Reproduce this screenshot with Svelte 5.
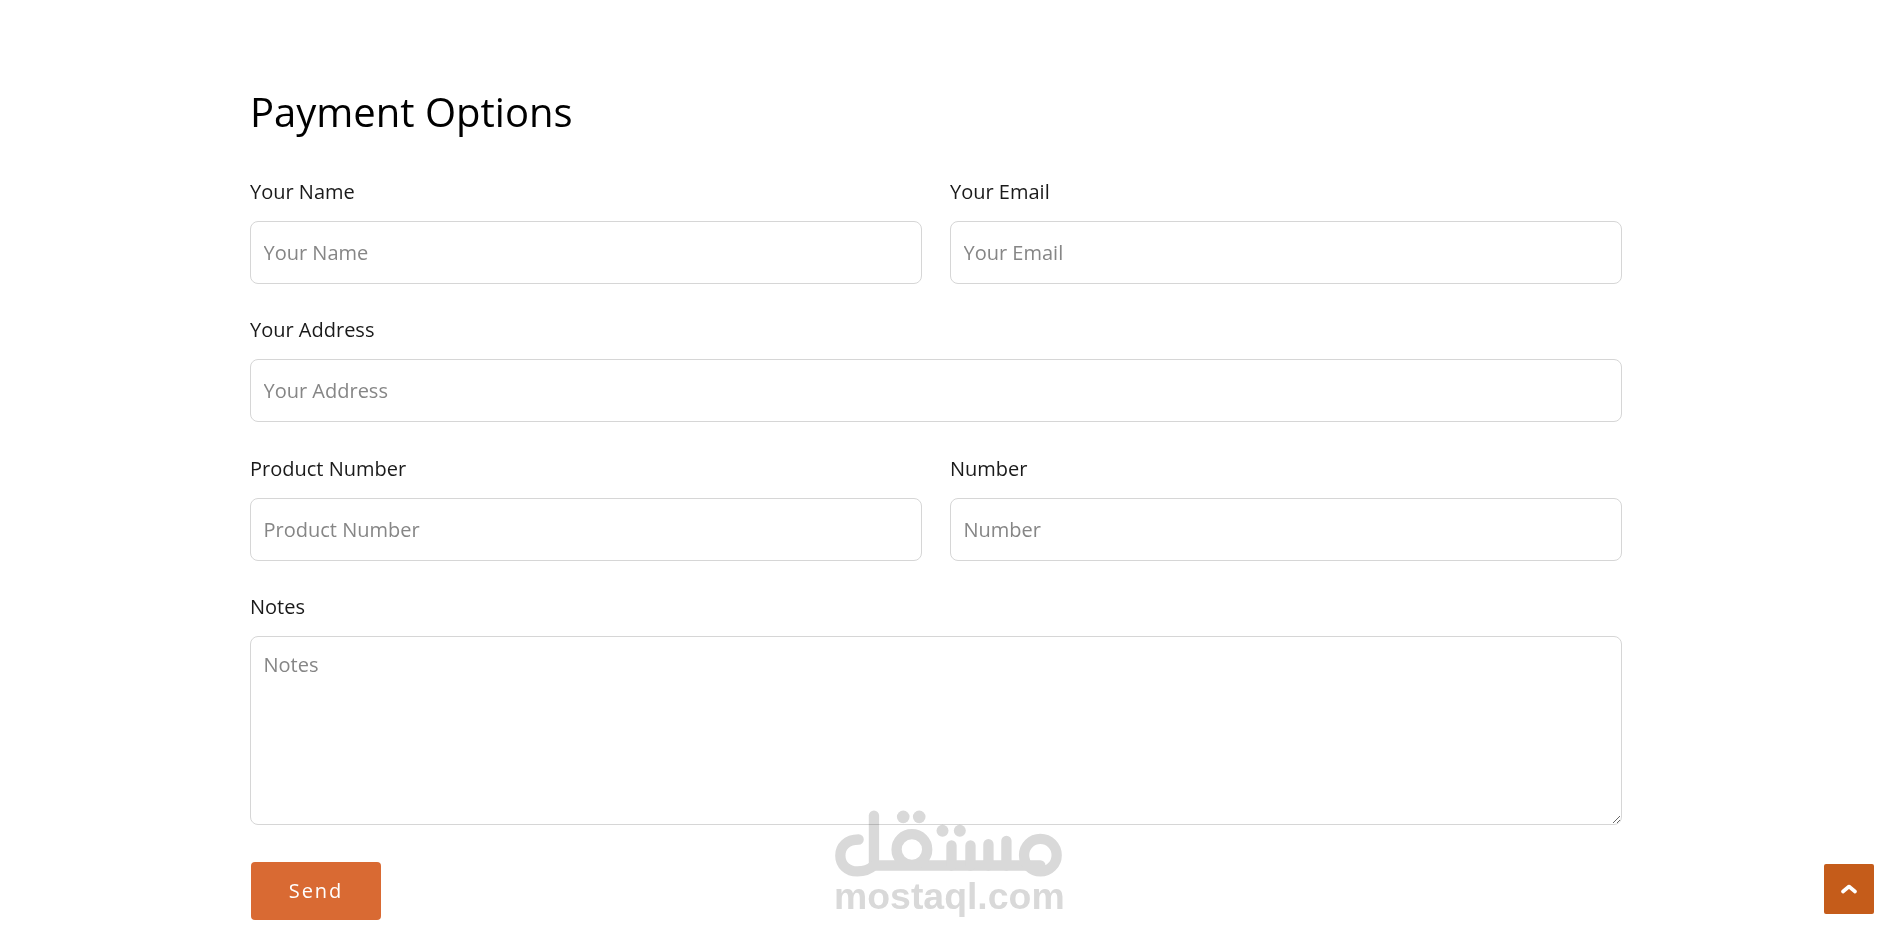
<script>
  const rows = [
    [{ label: "Your Name" }, { label: "Your Email" }],
    [{ label: "Your Address" }],
    [{ label: "Product Number" }, { label: "Number" }]
  ];
</script>

<main class="page">
  <h2 class="title">Payment Options</h2>
  <form class="form" on:submit|preventDefault>
    {#each rows as row}
      <div class="row">
        {#each row as field}
          <div class="field">
            <label for={field.label}>{field.label}</label>
            <input id={field.label} type="text" placeholder={field.label} />
          </div>
        {/each}
      </div>
    {/each}
    <div class="field">
      <label for="notes">Notes</label>
      <textarea id="notes" placeholder="Notes"></textarea>
    </div>
    <button class="send" type="submit">Send</button>
  </form>
</main>

<!-- watermark sits over the form -->
<div class="watermark" aria-hidden="true">
  <svg class="mark" viewBox="105 90 682 200" width="227" height="67">
    <g fill="none" stroke="#d9d9d9" stroke-width="31" stroke-linecap="round" stroke-linejoin="round">
      <path d="M222 106V256" />
      <path d="M176 178C140 178 121 200 121 226C121 254 142 274 172 274C198 274 212 265 222 256H722" />
      <circle cx="336" cy="208" r="46" />
      <path d="M455 196V256M512 196V256M566 192V256M620 182V256" />
      <circle cx="722" cy="225" r="49" />
    </g>
    <g fill="#d9d9d9">
      <circle cx="310" cy="110" r="19" />
      <circle cx="358" cy="110" r="19" />
      <circle cx="428" cy="152" r="18" />
      <circle cx="480" cy="152" r="18" />
    </g>
  </svg>
  <span class="mark-text">mostaql.com</span>
</div>

<button class="to-top" type="button" aria-label="Back to top">
  <svg viewBox="0 0 16 10" width="16" height="10">
    <path d="M2 7.5L8 2.5L14 7.5" fill="none" stroke="#fff" stroke-width="3.6" stroke-linecap="round" stroke-linejoin="round" />
  </svg>
</button>

<style>
  :global(body) {
    background: #fff;
    overflow: hidden;
  }

  .page {
    width: 1372px;
    margin-left: 250px;
    padding-top: 85px;
    font-family: "Open Sans", sans-serif;
    color: #1a1a1a;
  }

  .title {
    margin: 0 0 41px;
    font-size: 40px;
    font-weight: 400;
    line-height: 54px;
    color: #000;
  }

  .form {
    display: flex;
    flex-direction: column;
    gap: 34.4px;
  }

  .row {
    display: flex;
    gap: 28px;
  }

  .field {
    flex: 1;
    display: flex;
    flex-direction: column;
    gap: 17px;
  }

  label {
    font-size: 20px;
    line-height: 24px;
  }

  input,
  textarea {
    box-sizing: border-box;
    width: 100%;
    border: 1px solid #d6d6d6;
    border-radius: 8px;
    background: #fff;
    padding: 0 12.5px;
    font-family: inherit;
    font-size: 20px;
    color: #212529;
    outline: none;
  }

  input {
    height: 63px;
  }

  textarea {
    display: block;
    height: 189px;
    padding-top: 14px;
  }

  input::placeholder,
  textarea::placeholder {
    color: #868686;
    opacity: 1;
  }

  .send {
    align-self: flex-start;
    width: 130px;
    height: 58px;
    margin: 2px 0 0 1px;
    border: 0;
    border-radius: 4px;
    background: #d96a33;
    color: #fff;
    font-family: inherit;
    font-size: 20px;
    font-weight: 500;
    letter-spacing: 1.9px;
  }

  .watermark {
    position: absolute;
    left: 835px;
    top: 810px;
    width: 227px;
    display: flex;
    flex-direction: column;
    mix-blend-mode: multiply;
    pointer-events: none;
  }

  .mark {
    display: block;
  }

  .mark-text {
    margin-top: -2px;
    margin-left: -1px;
    font-family: "Liberation Sans", Arial, sans-serif;
    font-size: 37.4px;
    font-weight: 700;
    line-height: 42px;
    color: #d9d9d9;
    white-space: nowrap;
  }

  .to-top {
    position: fixed;
    right: 24px;
    bottom: 20px;
    width: 50px;
    height: 50px;
    display: flex;
    align-items: center;
    justify-content: center;
    padding: 0;
    border: 0;
    border-radius: 2px;
    background: #c55c1a;
  }
</style>
